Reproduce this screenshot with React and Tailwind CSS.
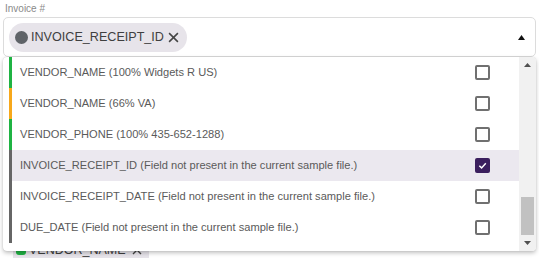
import React from "react";

const rows = [
  { text: "VENDOR_NAME (100% Widgets R US)", color: "bg-[#1fb343]" },
  { text: "VENDOR_NAME (66% VA)", color: "bg-[#f7a81b]" },
  { text: "VENDOR_PHONE (100% 435-652-1288)", color: "bg-[#1fb343]" },
  { text: "INVOICE_RECEIPT_ID (Field not present in the current sample file.)", color: "bg-[#666666]", checked: true },
  { text: "INVOICE_RECEIPT_DATE (Field not present in the current sample file.)", color: "bg-[#666666]" },
  { text: "DUE_DATE (Field not present in the current sample file.)", color: "bg-[#666666]" },
];

function Checkbox({ checked }) {
  if (checked) {
    return (
      <div className="w-[15px] h-[15px] rounded-[2px] bg-[#3b1f5e] flex items-center justify-center">
        <svg width="11" height="11" viewBox="0 0 12 12">
          <path d="M2.5 6.3 L5 8.6 L9.6 3.6" fill="none" stroke="white" strokeWidth="1.6" />
        </svg>
      </div>
    );
  }
  return <div className="w-[15px] h-[15px] rounded-[2px] border-2 border-[#707070] bg-white" />;
}

export default function App() {
  return (
    <div className="w-[539px] h-[258px] bg-white overflow-hidden relative" style={{ fontFamily: '"Liberation Sans", Arial, sans-serif' }}>
      <div className="px-[3px] pt-[3px]">
        <div className="text-[10px] leading-[12px] text-[#8a8a8a] pl-[2px]">Invoice #</div>
        <div className="relative mt-[2px]">
          <div className="h-[40px] border border-[#dcdcdc] rounded-[5px] flex items-center pl-[5px] pr-[10px]">
            <div className="h-[29px] rounded-full bg-[#e7e4ea] flex items-center pl-[6px] pr-[8px] gap-[3px]">
              <div className="w-[13px] h-[13px] rounded-full bg-[#5f6368]" />
              <span className="text-[12.6px] text-[#3f3f3f]">INVOICE_RECEIPT_ID</span>
              <svg width="11" height="11" viewBox="0 0 10 10" className="ml-[1px]">
                <path d="M1 1 L9 9 M9 1 L1 9" stroke="#444" strokeWidth="1.4" />
              </svg>
            </div>
            <div className="ml-auto">
              <svg width="7" height="5" viewBox="0 0 7 5">
                <path d="M0 5 L3.5 0 L7 5 Z" fill="#111" />
              </svg>
            </div>
          </div>

          <div className="mt-[182px] pl-[10px] flex">
            <div className="h-[22px] rounded-[4px] bg-[#e7e4ea] flex items-center pl-[3px] pr-[7px] gap-[3px]">
              <div className="w-[10px] h-[10px] rounded-[3px] bg-[#1fb343]" />
              <span className="text-[12.5px] text-[#3f3f3f]">VENDOR_NAME</span>
              <svg width="10" height="10" viewBox="0 0 10 10" className="ml-[3px]">
                <path d="M1 1 L9 9 M9 1 L1 9" stroke="#444" strokeWidth="1.4" />
              </svg>
            </div>
          </div>

          <div className="absolute left-0 right-0 top-[40px] h-[194px] bg-white rounded-[4px] shadow-[0_2px_4px_rgba(0,0,0,0.25),0_0_1px_rgba(0,0,0,0.2)] flex overflow-hidden">
            <div className="flex-1 pl-[6px] flex flex-col">
              {rows.map((r, i) => (
                <div key={i} className={`flex items-center h-[31px] ${r.checked ? "bg-[#ebe8ef]" : ""}`}>
                  <div className={`w-[3px] self-stretch ${r.color}`} />
                  <span className="ml-[8px] text-[11.1px] text-[#5a5a5a]">{r.text}</span>
                  <div className="ml-auto mr-[29px]">
                    <Checkbox checked={r.checked} />
                  </div>
                </div>
              ))}
            </div>
            <div className="w-[17px] bg-[#f1f1f1] flex flex-col items-center">
              <svg width="7" height="4" viewBox="0 0 7 4" className="mt-[6px]">
                <path d="M0 4 L3.5 0 L7 4 Z" fill="#505050" />
              </svg>
              <div className="flex-1" />
              <div className="w-[13px] h-[38px] bg-[#c1c1c1] mb-[6px]" />
              <svg width="7" height="4" viewBox="0 0 7 4" className="mb-[6px]">
                <path d="M0 0 L7 0 L3.5 4 Z" fill="#505050" />
              </svg>
            </div>
          </div>
        </div>
      </div>
    </div>
  );
}
